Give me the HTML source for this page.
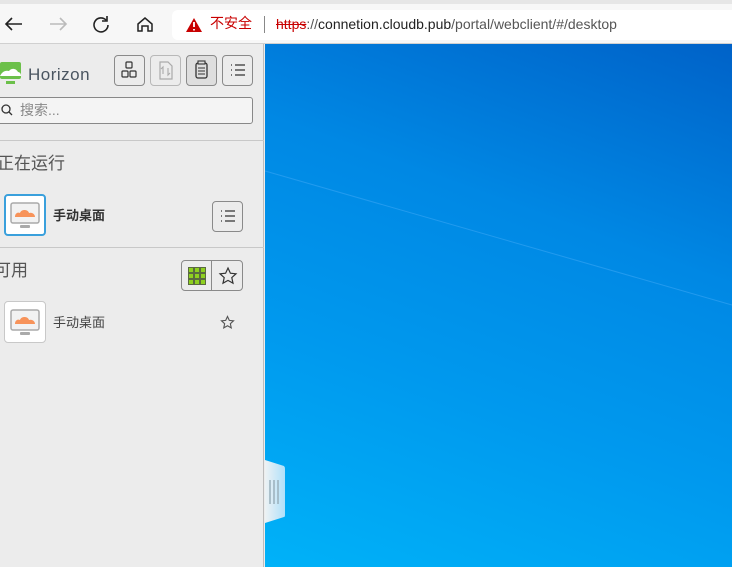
<!DOCTYPE html>
<html><head><meta charset="utf-8"><style>
*{margin:0;padding:0;box-sizing:border-box}
body{width:732px;height:567px;overflow:hidden;position:relative;background:#ececec;font-family:"Liberation Sans","Noto Sans CJK SC",sans-serif}
.bar{position:absolute;left:0;top:0;width:732px;height:44px;background:#f7f7f7;border-bottom:1px solid #d0d0d0;border-top:4px solid #e6e6e6}
.addr{position:absolute;left:172px;top:6px;width:570px;height:30px;background:#fff;border-radius:6px}
.side{position:absolute;left:0;top:44px;width:264px;height:523px;background:#ececec;border-right:1px solid #bdbdbd}
.desk{position:absolute;left:265px;top:44px;width:467px;height:523px;background:linear-gradient(200deg,#0062c8 0%,#0088e4 35%,#0099ee 65%,#00b2f8 100%);overflow:hidden}
.btn{position:absolute;width:31px;height:31px;border:1px solid #8a8a8a;border-radius:4px;background:#ececec}
.abs{position:absolute;line-height:1.2}
.ic{position:absolute;width:42px;height:42px;background:#fff;border:1px solid #c8c8c8;border-radius:4px}
</style></head><body>
<div class="bar">
<svg class="abs" style="left:2px;top:8px" width="160" height="24" viewBox="0 0 160 24">
<path d="M20 12H4M10 6l-6 6 6 6" stroke="#222" stroke-width="1.6" fill="none"/>
<path d="M48 12h16M58 6l6 6-6 6" stroke="#bbb" stroke-width="1.6" fill="none"/>
<path d="M104 8a7 7 0 1 0 2 5M105 4v5h-5" stroke="#222" stroke-width="1.6" fill="none"/>
<path d="M136 12l7-6 7 6v7h-4v-5h-6v5h-4z" stroke="#222" stroke-width="1.5" fill="none"/>
</svg>
<div class="addr">
<svg class="abs" style="left:13px;top:7px" width="18" height="16" viewBox="0 0 18 16"><path d="M9 1L17 15H1z" fill="#c80000"/><path d="M9 5v5M9 12v1.5" stroke="#fff" stroke-width="1.8"/></svg>
<span class="abs" style="left:38px;top:5px;font-size:14px;color:#c80000">不安全</span>
<span class="abs" style="left:92px;top:6px;width:1px;height:17px;background:#888"></span>
<span class="abs" style="left:104px;top:6px;font-size:14px;color:#555;white-space:nowrap"><s style="color:#c80000">https</s>://<span style="color:#222">connetion.cloudb.pub</span>/portal/webclient/#/desktop</span>
</div>
</div>
<div class="side">
<svg class="abs" style="left:0;top:18px" width="22" height="24" viewBox="0 0 22 24"><rect x="0" y="0" width="21" height="17" rx="2" fill="#6cc04a"/><path d="M0 14c2-4 5-6 9-5 2-3 7-3 9 1 2 0 3 2 3 4z" fill="#fff"/><rect x="6" y="19" width="9" height="3" fill="#6cc04a"/></svg>
<span class="abs" style="left:28px;top:21px;font-size:17px;color:#4a5560;letter-spacing:0.5px">Horizon</span>
<div class="btn" style="left:114px;top:11px"><svg width="29" height="29" viewBox="0 0 29 29"><rect x="11" y="6" width="6" height="6" rx="1" fill="none" stroke="#333" stroke-width="1.2"/><rect x="7" y="15" width="6" height="6" rx="1" fill="none" stroke="#333" stroke-width="1.2"/><rect x="15" y="15" width="6" height="6" rx="1" fill="none" stroke="#333" stroke-width="1.2"/></svg></div>
<div class="btn" style="left:150px;top:11px;border-color:#b8b8b8"><svg width="29" height="29" viewBox="0 0 29 29"><path d="M9 6h8l4 4v13H9z" fill="none" stroke="#aaa" stroke-width="1.2"/><path d="M12 18v-7l-2 2M17 12v7l2-2" stroke="#aaa" fill="none" stroke-width="1.1"/></svg></div>
<div class="btn" style="left:186px;top:11px;background:#dedede"><svg width="29" height="29" viewBox="0 0 29 29"><rect x="9" y="7" width="11" height="15" rx="2" fill="none" stroke="#333" stroke-width="1.3"/><rect x="11" y="5" width="7" height="3" fill="#dedede" stroke="#333" stroke-width="1.1"/><path d="M11 12h7M11 15h7M11 18h7" stroke="#333"/></svg></div>
<div class="btn" style="left:222px;top:11px"><svg width="29" height="29" viewBox="0 0 29 29"><path d="M8 9h1M8 14h1M8 19h1M12 9h10M12 14h10M12 19h10" stroke="#333" stroke-width="1.3"/></svg></div>
<div class="abs" style="left:-4px;top:53px;width:257px;height:27px;border:1px solid #888;border-radius:3px;background:#f4f4f4"></div>
<svg class="abs" style="left:1px;top:60px" width="12" height="12" viewBox="0 0 12 12"><circle cx="5" cy="5" r="4" fill="none" stroke="#333" stroke-width="1.3"/><path d="M8 8l3 3" stroke="#333" stroke-width="1.3"/></svg>
<span class="abs" style="left:20px;top:58px;font-size:14px;color:#888">搜索...</span>
<div class="abs" style="left:0;top:96px;width:264px;height:1px;background:#c8c8c8"></div>
<span class="abs" style="left:-3px;top:110px;font-size:17px;color:#555">正在运行</span>
<div class="ic" style="left:4px;top:150px;border:2px solid #3aa0dc"><svg width="38" height="38" viewBox="0 0 38 38"><rect x="5" y="7" width="28" height="20" rx="2" fill="#f2f2f2" stroke="#aaa" stroke-width="1.5"/><path d="M9 21c0-4 3-5 5-4 1-4 8-4 9 0 3-1 6 1 6 4z" fill="#f7935a"/><rect x="14" y="29" width="10" height="3" rx="1" fill="#aaa"/></svg></div>
<span class="abs" style="left:53px;top:164px;font-size:13px;color:#333;font-weight:bold">手动桌面</span>
<div class="btn" style="left:212px;top:157px"><svg width="29" height="29" viewBox="0 0 29 29"><path d="M8 9h1M8 14h1M8 19h1M12 9h10M12 14h10M12 19h10" stroke="#333" stroke-width="1.2"/></svg></div>
<div class="abs" style="left:0;top:203px;width:264px;height:1px;background:#c8c8c8"></div>
<span class="abs" style="left:-6px;top:217px;font-size:17px;color:#555">可用</span>
<div class="btn" style="left:181px;top:216px;width:62px;height:31px"></div>
<div class="abs" style="left:211px;top:217px;width:1px;height:29px;background:#8a8a8a"></div>
<svg class="abs" style="left:188px;top:223px" width="18" height="18" viewBox="0 0 18 18"><rect width="18" height="18" fill="#5a6a40"/><g fill="#8ed020"><rect x="1" y="1" width="4" height="4"/><rect x="7" y="1" width="4" height="4"/><rect x="13" y="1" width="4" height="4"/><rect x="1" y="7" width="4" height="4"/><rect x="7" y="7" width="4" height="4"/><rect x="13" y="7" width="4" height="4"/><rect x="1" y="13" width="4" height="4"/><rect x="7" y="13" width="4" height="4"/><rect x="13" y="13" width="4" height="4"/></g></svg>
<svg class="abs" style="left:218px;top:222px" width="20" height="20" viewBox="0 0 20 20"><path d="M10 2l2.4 5.2 5.6.6-4.2 3.8 1.2 5.6L10 14.4 5 17.2l1.2-5.6L2 7.8l5.6-.6z" fill="none" stroke="#333" stroke-width="1.2"/></svg>
<div class="ic" style="left:4px;top:257px"><svg width="40" height="40" viewBox="0 0 40 40"><rect x="6" y="8" width="28" height="20" rx="2" fill="#f2f2f2" stroke="#aaa" stroke-width="1.5"/><path d="M10 22c0-4 3-5 5-4 1-4 8-4 9 0 3-1 6 1 6 4z" fill="#f7935a"/><rect x="15" y="30" width="10" height="3" rx="1" fill="#aaa"/></svg></div>
<span class="abs" style="left:53px;top:271px;font-size:13px;color:#444">手动桌面</span>
<svg class="abs" style="left:220px;top:271px" width="15" height="15" viewBox="0 0 20 20"><path d="M10 2l2.4 5.2 5.6.6-4.2 3.8 1.2 5.6L10 14.4 5 17.2l1.2-5.6L2 7.8l5.6-.6z" fill="none" stroke="#555" stroke-width="1.5"/></svg>
</div>
<div class="desk">
<svg class="abs" style="left:0;top:0" width="467" height="523"><line x1="0" y1="127" x2="467" y2="261" stroke="#3aa6f4" stroke-width="1" opacity="0.6"/></svg>
<svg class="abs" style="left:0;top:416px" width="22" height="64" viewBox="0 0 22 64"><path d="M0 0L19 6Q20 7 20 9V55Q20 57 19 57L0 63z" fill="url(#g)"/><defs><linearGradient id="g"><stop offset="0" stop-color="#eef2f4"/><stop offset="1" stop-color="#b0e0fa"/></linearGradient></defs><path d="M5 20v24M9 20v24M13 20v24" stroke="#9ab0bc" stroke-width="1.5"/></svg>
</div>
</body></html>
